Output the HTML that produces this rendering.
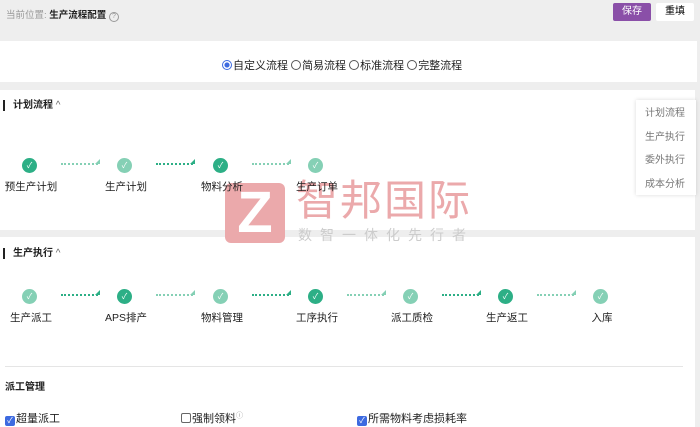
<!DOCTYPE html><html><head><meta charset="utf-8"><style>
*{margin:0;padding:0;box-sizing:border-box}
body{width:700px;height:427px;background:#eee;font-family:"Liberation Sans","Noto Sans CJK SC",sans-serif;font-size:10px;color:#222;position:relative;overflow:hidden}
.a{position:absolute;white-space:nowrap}
.w{position:absolute;background:#fff;left:0;right:5px}
.c{position:absolute;width:15px;height:15px;border-radius:50%;background:#2daf86;color:#fff;font-size:8px;text-align:center;line-height:15px}
.c.l{background:#85d0b5}
.ar{position:absolute;width:37px;height:5px;border-bottom:2px dotted #2daf86}
.ar.l{border-color:#85d0b5}
.ar:after{content:"";position:absolute;right:-2px;top:-1px;border-left:5px solid transparent;border-bottom:5px solid #2daf86}
.ar.l:after{border-bottom-color:#85d0b5}
.lb{position:absolute;font-size:10.5px;transform:translateX(-50%)}
.rad{display:inline-block;width:10px;height:10px;border:1px solid #555;border-radius:50%;vertical-align:-1px;margin-right:1px}
.cb{display:inline-block;width:10px;height:10px;border:1px solid #666;border-radius:2px;vertical-align:-1px;margin-right:1px;font-size:8px;line-height:8px;text-align:center;color:#fff}
.cb.on{background:#3d6ae0;border-color:#3d6ae0}
</style></head><body>
<div class="a" style="left:6px;top:7px;font-size:9.5px;color:#999">当前位置: <b style="color:#222">生产流程配置</b> <span style="display:inline-block;width:10px;height:10px;border:1px solid #999;border-radius:50%;font-size:7px;text-align:center;line-height:8px;color:#999">?</span></div>
<div class="a" style="left:613px;top:3px;width:38px;height:18px;background:#8a4fa8;color:#fff;text-align:center;line-height:18px;border-radius:2px">保存</div>
<div class="a" style="left:656px;top:3px;width:38px;height:18px;background:#fff;color:#000;text-align:center;line-height:18px;border-radius:2px">重填</div>
<div class="w" style="top:41px;height:41px;right:3px"></div>
<div class="a" style="left:222px;top:57px;font-size:11px"><span class="rad" style="border-color:#3d6ae0;background:radial-gradient(#3d6ae0 40%,#fff 50%)"></span>自定义流程 <span class="rad"></span>简易流程 <span class="rad"></span>标准流程 <span class="rad"></span>完整流程</div>
<div class="w" style="top:90px;height:140px"></div>
<div class="a" style="left:3px;top:100px;font-weight:bold;border-left:2px solid #222;padding-left:8px;line-height:11px">计划流程 <span style="font-weight:normal;color:#666">^</span></div>
<div class="a" style="left:636px;top:100px;width:60px;height:95px;background:#fff;box-shadow:0 0 4px rgba(0,0,0,.15);color:#777;line-height:23.5px;padding:2px 0 0 9px">计划流程<br>生产执行<br>委外执行<br>成本分析</div>
<div class="w" style="top:237px;height:190px"></div>
<div class="a" style="left:3px;top:248px;font-weight:bold;border-left:2px solid #222;padding-left:8px;line-height:11px">生产执行 <span style="font-weight:normal;color:#666">^</span></div>
<div class="a" style="left:5px;top:366px;width:678px;height:1px;background:#e5e5e5"></div>
<div class="a" style="left:5px;top:378px;font-weight:bold">派工管理</div>
<div class="a" style="left:5px;top:410px;font-size:11px"><span class="cb on">✓</span>超量派工</div>
<div class="a" style="left:181px;top:410px;font-size:11px"><span class="cb"></span>强制领料<sup style="color:#999;font-size:7px">ⓘ</sup></div>
<div class="a" style="left:357px;top:410px;font-size:11px"><span class="cb on">✓</span>所需物料考虑损耗率</div>
<div class="a" style="left:225px;top:183px;width:60px;height:60px;background:#eba9ab;border-radius:6px;color:#fff;font:bold 58px/60px 'Liberation Sans',sans-serif;text-align:center">Z</div>
<div class="a" style="left:296px;top:178px;font-size:42px;color:#eba9ab;letter-spacing:2px;line-height:46px">智邦国际</div>
<div class="a" style="left:298px;top:225px;font-size:14px;color:#ccc;letter-spacing:8px">数智一体化先行者</div>
<div id="s"></div>
<script>
function row(y,xs,kinds,labels){var h='';for(var i=0;i<xs.length;i++){h+='<div class="c'+(kinds[i]?' l':'')+'" style="left:'+(xs[i]-7)+'px;top:'+(y-7)+'px">✓</div>';h+='<div class="lb" style="left:'+(xs[i]+2)+'px;top:'+(y+14)+'px">'+labels[i]+'</div>';if(i<xs.length-1)h+='<div class="ar'+(kinds[i+1]?' l':'')+'" style="left:'+(xs[i]+32)+'px;top:'+(y-5)+'px"></div>';}return h;}
var x4=[29,124,220,315],x7=[29,124,220,315,410,505,600];
document.getElementById('s').innerHTML=row(165,x4,[0,1,0,1],['预生产计划','生产计划','物料分析','生产订单'])+row(296,x7,[1,0,1,0,1,0,1],['生产派工','APS排产','物料管理','工序执行','派工质检','生产返工','入库']);
</script>
</body></html>
